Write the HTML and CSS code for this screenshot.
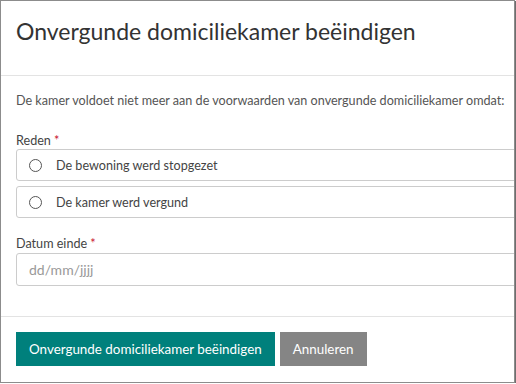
FILE: index.html
```html
<!DOCTYPE html>
<html lang="nl">
<head>
<meta charset="utf-8">
<title>Onvergunde domiciliekamer beëindigen</title>
<link rel="stylesheet" href="styles.css">
</head>
<body>
<div class="modal">
  <div class="modal-header">
    <h1 class="modal-title">Onvergunde domiciliekamer beëindigen</h1>
  </div>
  <div class="modal-body">
    <p class="intro">De kamer voldoet niet meer aan de voorwaarden van onvergunde domiciliekamer omdat:</p>
    <div class="field">
      <div class="label">Reden <span class="req">*</span></div>
      <label class="radio-box"><span class="radio"></span><span>De bewoning werd stopgezet</span></label>
      <label class="radio-box"><span class="radio"></span><span>De kamer werd vergund</span></label>
    </div>
    <div class="field">
      <div class="label">Datum einde <span class="req">*</span></div>
      <div class="input"><span class="placeholder">dd/mm/<u>jjjj</u></span></div>
    </div>
  </div>
  <div class="modal-footer">
    <button class="btn btn-primary">Onvergunde domiciliekamer beëindigen</button>
    <button class="btn btn-secondary">Annuleren</button>
  </div>
</div>
</body>
</html>
```
FILE: styles.css
```css
html, body {
  margin: 0;
  padding: 0;
  background: #fff;
}
body {
  font-family: Lato, "Open Sans", sans-serif;
  color: #333;
}
.modal {
  width: 513px;
  height: 381px;
  border: 1px solid #8c8c8c;
  box-shadow: 1px 1px 0 #6e6e6e;
  overflow: hidden;
  display: flex;
  flex-direction: column;
  background: #fff;
}
.modal-header {
  height: 74px;
  border-bottom: 1px solid #e3e3e3;
  padding: 0 15px;
  display: flex;
  align-items: center;
  flex: none;
}
.modal-title {
  margin: 0;
  font-weight: 400;
  font-size: 23px;
  color: #333;
  padding-bottom: 14px;
}
.modal-body {
  flex: 1;
  padding: 17px 0 0 15px;
}
.intro {
  margin: 0 0 24px;
  font-size: 12.6px;
  color: #555;
  line-height: 16px;
  white-space: nowrap;
}
.field {
  margin-bottom: 18px;
}
.label {
  font-size: 12.6px;
  color: #444;
  line-height: 16px;
}
.req {
  color: #c8102e;
}
.radio-box {
  display: flex;
  align-items: center;
  width: 520px;
  height: 30px;
  border: 1px solid #cccccc;
  border-radius: 3px;
  margin-top: 5px;
  font-size: 12.6px;
  color: #444;
}
.label + .radio-box {
  margin-top: 0;
}
.radio {
  width: 11px;
  height: 11px;
  border: 1px solid #555;
  border-radius: 50%;
  margin: 0 14px 0 12px;
}
.input {
  width: 520px;
  height: 33px;
  margin-top: 1px;
  border: 1px solid #cccccc;
  border-radius: 3px;
  display: flex;
  align-items: center;
  font-size: 14px;
  color: #999;
  padding-left: 12px;
  box-sizing: border-box;
}
.placeholder u {
  text-decoration-color: #999;
}
.modal-footer {
  height: 66px;
  flex: none;
  border-top: 1px solid #e3e3e3;
  padding: 15px 0 0 15px;
  box-sizing: border-box;
  display: flex;
  align-items: flex-start;
  gap: 5px;
}
.btn {
  height: 34px;
  border: 0;
  border-radius: 0;
  font-family: Lato, "Open Sans", sans-serif;
  font-size: 13.4px;
  color: #fff;
  padding: 0 13px;
  cursor: pointer;
}
.btn-primary {
  background: #00807c;
}
.btn-secondary {
  background: #858585;
}
```
